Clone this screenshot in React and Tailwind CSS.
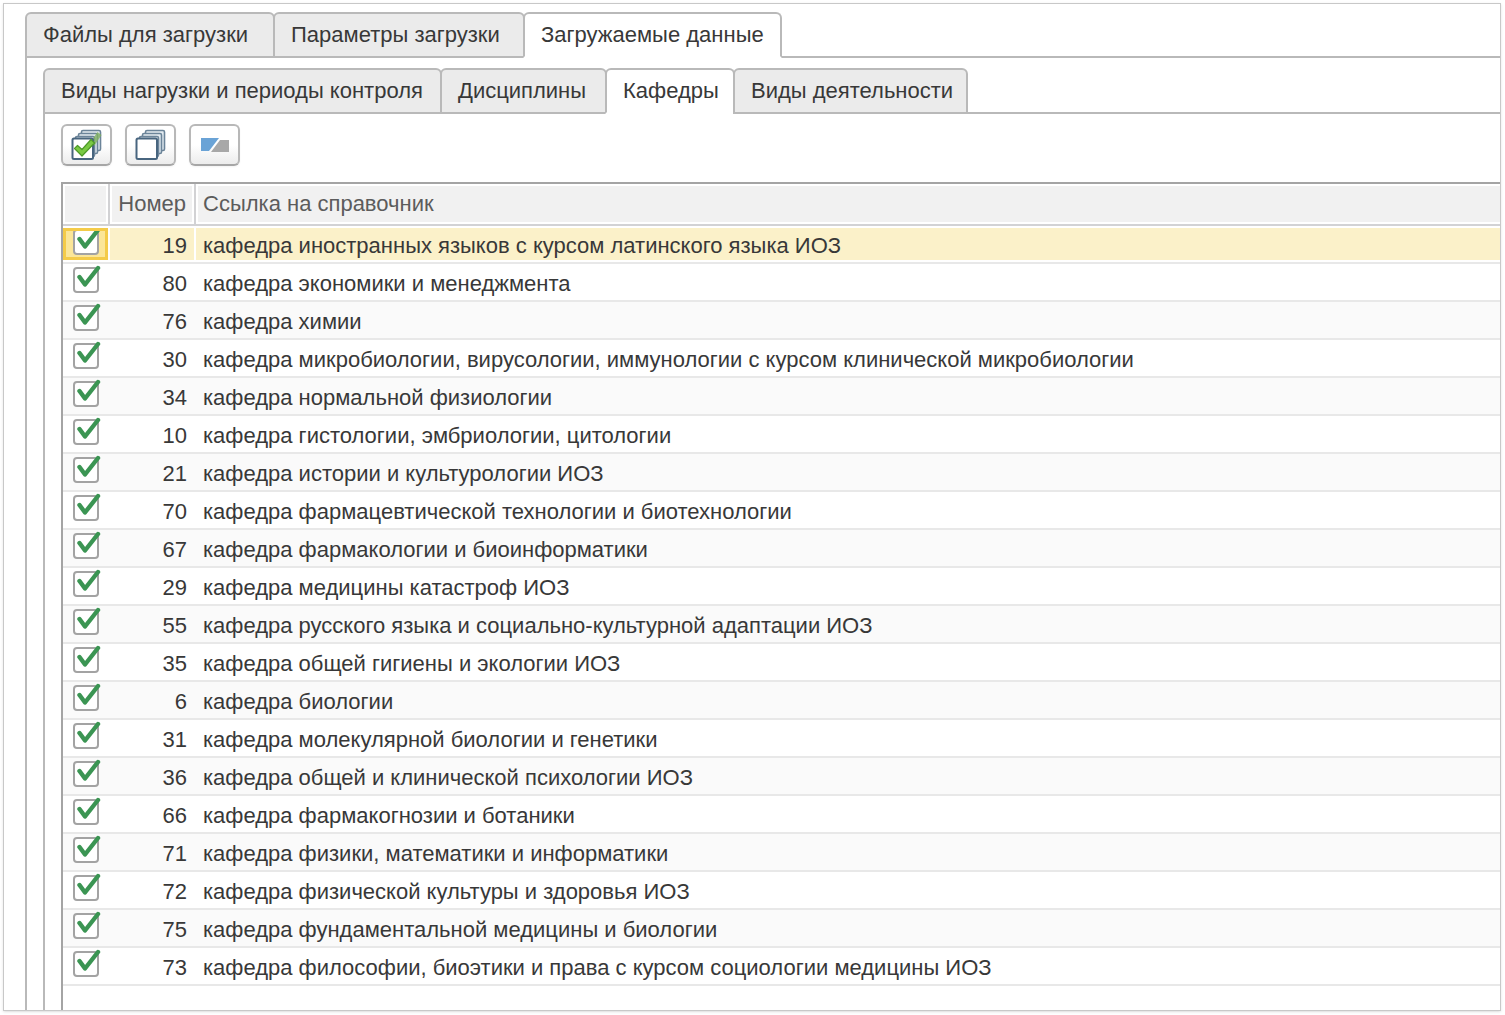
import { useState } from "react";

const ROWS = [
  [19, "кафедра иностранных языков с курсом латинского языка ИОЗ"],
  [80, "кафедра экономики и менеджмента"],
  [76, "кафедра химии"],
  [30, "кафедра микробиологии, вирусологии, иммунологии с курсом клинической микробиологии"],
  [34, "кафедра нормальной физиологии"],
  [10, "кафедра гистологии, эмбриологии, цитологии"],
  [21, "кафедра истории и культурологии ИОЗ"],
  [70, "кафедра фармацевтической технологии и биотехнологии"],
  [67, "кафедра фармакологии и биоинформатики"],
  [29, "кафедра медицины катастроф ИОЗ"],
  [55, "кафедра русского языка и социально-культурной адаптации ИОЗ"],
  [35, "кафедра общей гигиены и экологии ИОЗ"],
  [6, "кафедра биологии"],
  [31, "кафедра молекулярной биологии и генетики"],
  [36, "кафедра общей и клинической психологии ИОЗ"],
  [66, "кафедра фармакогнозии и ботаники"],
  [71, "кафедра физики, математики и информатики"],
  [72, "кафедра физической культуры и здоровья ИОЗ"],
  [75, "кафедра фундаментальной медицины и биологии"],
  [73, "кафедра философии, биоэтики и права с курсом социологии медицины ИОЗ"],
];

const OUTER_TABS = [
  ["Файлы для загрузки", "min-w-[250px]"],
  ["Параметры загрузки", "min-w-[252px]"],
  ["Загружаемые данные", "min-w-[259px]"],
];

const INNER_TABS = [
  ["Виды нагрузки и периоды контроля", "min-w-[399px]"],
  ["Дисциплины", "min-w-[167px]"],
  ["Кафедры", "min-w-[130px]"],
  ["Виды деятельности", "min-w-[235px]"],
];

function Tabs({ label, items, active }) {
  return (
    <div role="tablist" aria-label={label} className="relative -mb-0.5 flex">
      {items.map(([text, width], i) => (
        <button
          key={text}
          type="button"
          role="tab"
          aria-selected={i === active}
          className={
            "h-[46px] rounded-t-md border-2 border-[#b9b9b9] pr-3 pl-4 text-left whitespace-nowrap " +
            width +
            (i > 0 ? " -ml-0.5" : "") +
            (i === active ? " border-b-white bg-white" : " bg-[#ebebeb]")
          }
        >
          {text}
        </button>
      ))}
    </div>
  );
}

function Stack({ checked }) {
  return (
    <svg width="32" height="32" viewBox="0 0 32 32" fill="none" aria-hidden="true">
      <g stroke="#6b8499" strokeWidth="1.6" fill="#e3ebf1">
        <rect x="10.500" y="1.500" width="19" height="20" rx="1.500" />
        <rect x="7.500" y="4.500" width="19" height="20" rx="1.500" />
        <rect x="4.500" y="7.500" width="19" height="20" rx="1.500" />
      </g>
      {checked && <path d="M20 17 28.500 4.500" stroke="#7fb060" strokeOpacity="0.8" strokeWidth="5" />}
      <rect x="1.500" y="9.500" width="20.500" height="20.500" rx="1.500" fill="#fff" stroke="#48657f" strokeWidth="2" />
      {checked && (
        <path
          d="M3.500 19.500 6.500 16.500 11 20.500 20 10.500 23.500 14 11 27z"
          fill="#7ac943"
          stroke="#4d9a28"
          strokeWidth="1.200"
          strokeLinejoin="round"
        />
      )}
    </svg>
  );
}

function ToolButton({ label, children }) {
  return (
    <button
      type="button"
      aria-label={label}
      className="flex h-[42px] w-[51px] items-center justify-center rounded-md border-2 border-[#b8b8b8] border-b-[#a6a6a6] bg-linear-to-b from-white from-50% to-[#ececec] shadow-xs"
    >
      {children}
    </button>
  );
}

function RowCheck({ label, checked, onChange, clipped }) {
  return (
    <label className={"relative ml-2.5 block w-7 " + (clipped ? "h-6 overflow-hidden" : "h-[29px]")}>
      <input
        type="checkbox"
        aria-label={label}
        checked={checked}
        onChange={onChange}
        className="absolute bottom-0 left-0 block size-[26px] appearance-none rounded border-2 border-[#a3a3a3] bg-white"
      />
      {checked && (
        <svg
          width="28"
          height="29"
          viewBox="0 0 28 29"
          fill="none"
          aria-hidden="true"
          className="pointer-events-none absolute bottom-0 left-0"
        >
          <path d="M6.500 13 12 20.500 25 4" stroke="#3b9553" strokeWidth="4.400" strokeLinecap="round" strokeLinejoin="round" />
        </svg>
      )}
    </label>
  );
}

export default function App() {
  const [off, setOff] = useState([]);
  const toggle = (n) => setOff((o) => (o.includes(n) ? o.filter((x) => x !== n) : [...o, n]));

  return (
    <div className="flex min-h-screen flex-col bg-white pt-[3px] pr-1 pb-1 pl-[3px] font-['Liberation_Sans',Arial,sans-serif] text-[22px] leading-7 text-[#383838]">
      <main className="flex grow flex-col border border-[#c8c8c8] pt-2 pl-[21px] shadow-sm">
        <Tabs label="Загрузка" items={OUTER_TABS} active={2} />
        <section className="flex grow flex-col border-t-2 border-l-2 border-[#b9b9b9] pt-2.5 pl-4">
          <Tabs label="Данные" items={INNER_TABS} active={2} />
          <section className="flex grow flex-col border-t-2 border-l-2 border-[#b9b9b9] pt-2.5 pl-4">
            <div className="flex gap-[13px]">
              <ToolButton label="Отметить все">
                <Stack checked />
              </ToolButton>
              <ToolButton label="Снять отметки">
                <Stack />
              </ToolButton>
              <ToolButton label="Инвертировать">
                <svg width="30" height="16" viewBox="0 0 30 16" aria-hidden="true">
                  <path d="M1 1h18L9 14H1z" fill="#6aa3d6" />
                  <path d="M20 3h9v12H11z" fill="#a8a8a8" />
                </svg>
              </ToolButton>
            </div>
            <div className="mt-4 grow border-t-2 border-l-2 border-[#a4a4a4]">
              <table className="w-full table-fixed border-separate border-spacing-0">
                <colgroup>
                  <col className="w-[47px]" />
                  <col className="w-[86px]" />
                  <col />
                </colgroup>
                <thead>
                  <tr className="h-[42px] text-left text-[#5c5c5c]">
                    <th
                      aria-label="Отметка"
                      className="border-r-2 border-b-2 border-[#d2d2d4] bg-[#f1f1f1] p-0 shadow-[inset_0_0_0_2px_white]"
                    />
                    <th className="border-r-2 border-b-2 border-[#d2d2d4] bg-[#f1f1f1] p-0 pr-2 text-right font-normal shadow-[inset_0_0_0_2px_white]">
                      Номер
                    </th>
                    <th className="border-b-2 border-[#d2d2d4] bg-[#f1f1f1] p-0 pl-[7px] font-normal shadow-[inset_0_2px_white,inset_0_-2px_white,inset_2px_0_white]">
                      Ссылка на справочник
                    </th>
                  </tr>
                </thead>
                <tbody>
                  {ROWS.map(([n, name], i) => {
                    const current = i === 0;
                    const cell =
                      "border-b-2 border-[#e8e8e8] p-0 " +
                      (current ? "bg-[#fbf1c9] " : i % 2 === 0 ? "bg-[#fafafa] " : "");
                    const inset = current ? "shadow-[inset_0_2px_white,inset_0_-2px_white,inset_-2px_0_white] " : "";
                    const lastInset = current ? "shadow-[inset_0_2px_white,inset_0_-2px_white] " : "";
                    return (
                      <tr key={n} className="h-[38px]">
                        <td className={cell + inset + "align-top"}>
                          {current ? (
                            <div className="mt-0.5 h-8 w-[45px] border-3 border-[#f4cb49] bg-[#fbe698]">
                              <div className="-ml-[3px]">
                                <RowCheck label={name} checked={!off.includes(n)} onChange={() => toggle(n)} clipped />
                              </div>
                            </div>
                          ) : (
                            <RowCheck label={name} checked={!off.includes(n)} onChange={() => toggle(n)} />
                          )}
                        </td>
                        <td className={cell + inset + "pt-1 pr-[9px] text-right"}>{n}</td>
                        <td className={cell + lastInset + "pt-1 pl-[7px] whitespace-nowrap"}>{name}</td>
                      </tr>
                    );
                  })}
                </tbody>
              </table>
            </div>
          </section>
        </section>
      </main>
    </div>
  );
}
